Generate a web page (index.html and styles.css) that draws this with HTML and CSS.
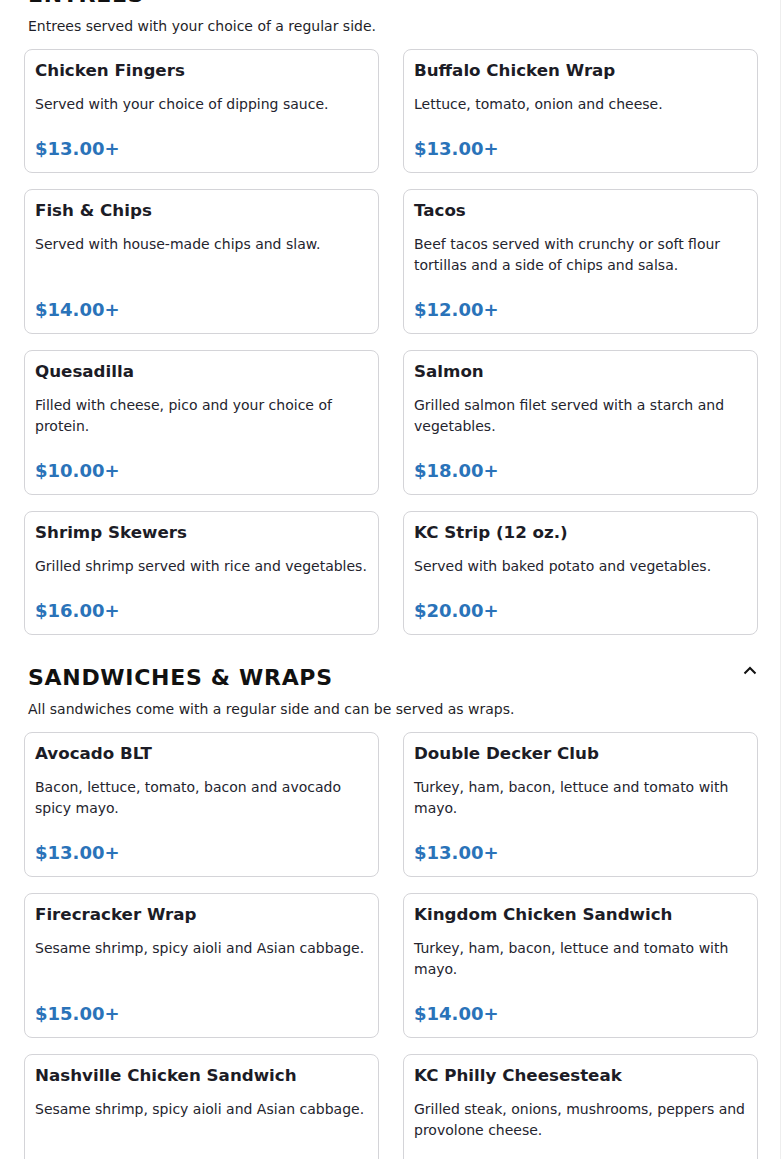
FILE: index.html
```html
<!DOCTYPE html>
<html lang="en">
<head>
<meta charset="utf-8">
<title>Menu</title>
<link rel="stylesheet" href="styles.css">
</head>
<body>
<main class="page">
  <section class="section">
    <div class="section-head">
      <h2 class="section-title">ENTREES</h2>
    </div>
    <p class="section-desc">Entrees served with your choice of a regular side.</p>
    <div class="grid">
      <div class="card"><h3 class="card-title">Chicken Fingers</h3><p class="card-desc">Served with your choice of dipping sauce.</p><div class="card-price">$13.00+</div></div>
      <div class="card"><h3 class="card-title">Buffalo Chicken Wrap</h3><p class="card-desc">Lettuce, tomato, onion and cheese.</p><div class="card-price">$13.00+</div></div>
      <div class="card"><h3 class="card-title">Fish &amp; Chips</h3><p class="card-desc">Served with house-made chips and slaw.</p><div class="card-price">$14.00+</div></div>
      <div class="card"><h3 class="card-title">Tacos</h3><p class="card-desc">Beef tacos served with crunchy or soft flour tortillas and a side of chips and salsa.</p><div class="card-price">$12.00+</div></div>
      <div class="card"><h3 class="card-title">Quesadilla</h3><p class="card-desc">Filled with cheese, pico and your choice of protein.</p><div class="card-price">$10.00+</div></div>
      <div class="card"><h3 class="card-title">Salmon</h3><p class="card-desc">Grilled salmon filet served with a starch and vegetables.</p><div class="card-price">$18.00+</div></div>
      <div class="card"><h3 class="card-title">Shrimp Skewers</h3><p class="card-desc">Grilled shrimp served with rice and vegetables.</p><div class="card-price">$16.00+</div></div>
      <div class="card"><h3 class="card-title">KC Strip (12 oz.)</h3><p class="card-desc">Served with baked potato and vegetables.</p><div class="card-price">$20.00+</div></div>
    </div>
  </section>
  <section class="section">
    <div class="section-head">
      <h2 class="section-title">SANDWICHES &amp; WRAPS</h2>
      <svg class="chevron" width="14" height="9" viewBox="0 0 14 9" aria-hidden="true"><path d="M1.5 7.5 L7 2 L12.5 7.5" fill="none" stroke="#111" stroke-width="2"/></svg>
    </div>
    <p class="section-desc">All sandwiches come with a regular side and can be served as wraps.</p>
    <div class="grid">
      <div class="card"><h3 class="card-title">Avocado BLT</h3><p class="card-desc">Bacon, lettuce, tomato, bacon and avocado spicy mayo.</p><div class="card-price">$13.00+</div></div>
      <div class="card"><h3 class="card-title">Double Decker Club</h3><p class="card-desc">Turkey, ham, bacon, lettuce and tomato with mayo.</p><div class="card-price">$13.00+</div></div>
      <div class="card"><h3 class="card-title">Firecracker Wrap</h3><p class="card-desc">Sesame shrimp, spicy aioli and Asian cabbage.</p><div class="card-price">$15.00+</div></div>
      <div class="card"><h3 class="card-title">Kingdom Chicken Sandwich</h3><p class="card-desc">Turkey, ham, bacon, lettuce and tomato with mayo.</p><div class="card-price">$14.00+</div></div>
      <div class="card"><h3 class="card-title">Nashville Chicken Sandwich</h3><p class="card-desc">Sesame shrimp, spicy aioli and Asian cabbage.</p><div class="card-price">$14.00+</div></div>
      <div class="card"><h3 class="card-title">KC Philly Cheesesteak</h3><p class="card-desc">Grilled steak, onions, mushrooms, peppers and provolone cheese.</p><div class="card-price">$15.00+</div></div>
    </div>
  </section>
</main>
</body>
</html>
```
FILE: styles.css
```css
html, body {
  margin: 0;
  padding: 0;
  background: #ffffff;
}
body {
  font-family: "DejaVu Sans", "Liberation Sans", sans-serif;
  color: #1f1f29;
  overflow: hidden;
}
.page {
  margin: -20px 1px 0 0;
  border-right: 1px solid #eeeeee;
  min-height: 1200px;
}
.section {
  padding: 0 22px 28px 24px;
}
.section-head {
  display: flex;
  align-items: center;
  justify-content: space-between;
  padding: 0 4px;
  margin-top: 1px;
}
.section-title {
  margin: 0;
  font-size: 22px;
  line-height: 28px;
  font-weight: 700;
  letter-spacing: 0.7px;
  color: #111;
}
.chevron {
  display: block;
  margin-right: -3px;
  margin-top: -15px;
}
.section-desc {
  margin: 7px 0 12px;
  padding: 0 4px;
  font-size: 14px;
  line-height: 21px;
  color: #1f1f29;
}
.grid {
  display: grid;
  grid-template-columns: 1fr 1fr;
  gap: 16px 24px;
}
.card {
  display: flex;
  flex-direction: column;
  border: 1px solid #d4d4d8;
  border-radius: 8px;
  padding: 9px 10px 11px;
}
.card-title {
  margin: 0;
  font-size: 16.7px;
  line-height: 22px;
  font-weight: 700;
  color: #1c1c26;
}
.card-desc {
  margin: 13px 0 22px;
  font-size: 14px;
  line-height: 21px;
  color: #24242e;
}
.card-price {
  margin-top: auto;
  font-size: 18px;
  line-height: 24px;
  font-weight: 700;
  color: #2a73b9;
}
```
